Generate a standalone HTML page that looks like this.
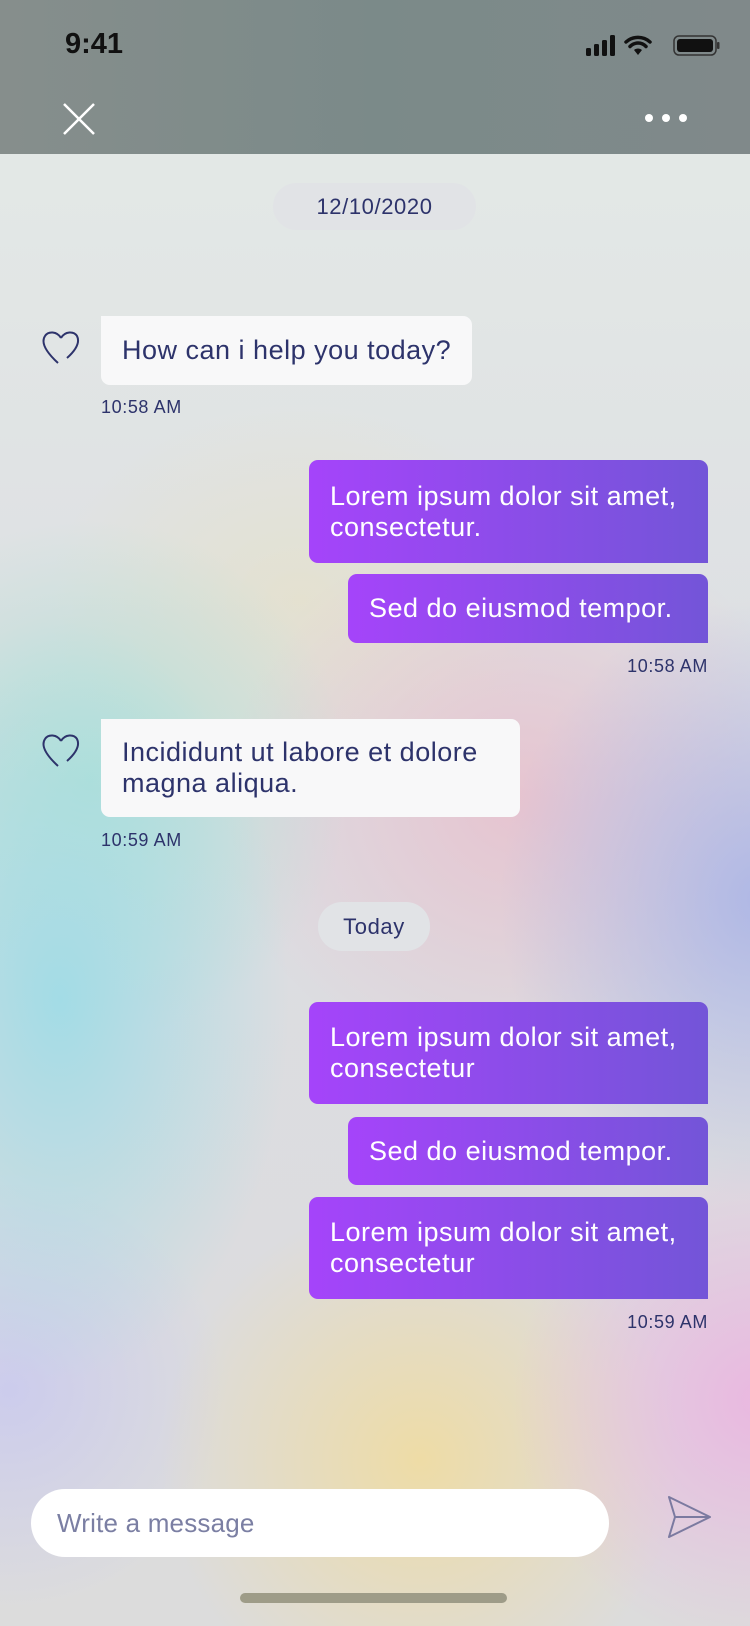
<!DOCTYPE html>
<html><head><meta charset="utf-8"><style>
*{margin:0;padding:0;box-sizing:border-box}
body{width:750px;height:1626px;overflow:hidden;position:relative;font-family:"Liberation Sans",sans-serif;
background:
radial-gradient(ellipse 230px 380px at 60px 1000px,rgba(160,220,230,.95),rgba(160,220,230,0) 100%),
radial-gradient(ellipse 260px 260px at 90px 780px,rgba(170,225,210,.8),rgba(170,225,210,0) 100%),
radial-gradient(ellipse 260px 300px at 760px 900px,rgba(170,180,230,.9),rgba(170,180,230,0) 100%),
radial-gradient(ellipse 300px 280px at 520px 800px,rgba(235,185,200,.7),rgba(235,185,200,0) 100%),
radial-gradient(ellipse 250px 250px at 760px 1400px,rgba(235,180,225,.9),rgba(235,180,225,0) 100%),
radial-gradient(ellipse 260px 260px at 420px 1460px,rgba(240,220,160,.9),rgba(240,220,160,0) 100%),
radial-gradient(ellipse 220px 220px at 10px 1390px,rgba(200,200,240,.8),rgba(200,200,240,0) 100%),
radial-gradient(ellipse 250px 200px at 300px 600px,rgba(230,225,200,.7),rgba(230,225,200,0) 100%),
linear-gradient(#e5ebe7,#dcdde2 50%,#dcdcdc);}
.hdr{position:absolute;left:0;top:0;width:750px;height:154px;background:linear-gradient(90deg,#868e8c,#7b8a89 50%,#80898a)}
.abs{position:absolute}
.pill{position:absolute;background:#e1e3e6;border-radius:24px;color:#2d336b;font-size:22px;letter-spacing:.6px;text-align:center}
.in{position:absolute;left:101px;background:#f8f8f9;border-radius:0 9px 9px 9px;color:#2d336b;font-size:27px;letter-spacing:.5px;line-height:31px;padding:0 21px;display:flex;align-items:center}
.out{position:absolute;right:42px;background:linear-gradient(90deg,#a544fa,#7355d8);border-radius:9px 9px 0 9px;color:#fff;font-size:27px;letter-spacing:.5px;line-height:31px;padding:0 21px;display:flex;align-items:center}
.t{position:absolute;color:#2d336b;font-size:18px;letter-spacing:.6px}
</style></head><body>
<div class="hdr"></div>
<div class="abs" style="left:65px;top:28px;font-size:29px;font-weight:bold;color:#111">9:41</div>
<svg class="abs" style="left:585px;top:34px" width="135" height="24">
<rect x="1" y="14" width="5" height="8" rx="1.5" fill="#111"/><rect x="9" y="10" width="5" height="12" rx="1.5" fill="#111"/><rect x="17" y="6" width="5" height="16" rx="1.5" fill="#111"/><rect x="25" y="1" width="5" height="21" rx="1.5" fill="#111"/>
<path d="M41 8a18 18 0 0 1 24 0M45 12.5a11 11 0 0 1 16 0" stroke="#111" stroke-width="3.5" fill="none" stroke-linecap="round"/><path d="M49 16l4 5 4-5a6 6 0 0 0-8 0z" fill="#111"/>
<rect x="89" y="2" width="42" height="19" rx="5" fill="none" stroke="#333" stroke-width="1.5"/><rect x="92" y="5" width="36" height="13" rx="3" fill="#111"/><rect x="132" y="8" width="2.5" height="7" rx="1" fill="#333"/>
</svg>
<svg class="abs" style="left:62px;top:102px" width="34" height="34"><path d="M2 2L32 32M32 2L2 32" stroke="#fff" stroke-width="2.5"/></svg>
<svg class="abs" style="left:644px;top:112px" width="44" height="14"><circle cx="5" cy="6" r="4" fill="#fff"/><circle cx="22" cy="6" r="4" fill="#fff"/><circle cx="39" cy="6" r="4" fill="#fff"/></svg>

<div class="pill" style="left:273px;top:183px;width:203px;height:47px;line-height:47px">12/10/2020</div>

<svg class="abs" style="left:41px;top:330px" width="40" height="36"><path d="M20 8C16 1 7 1 4 6C0 12 4 21 17 33M20 8C24 1 33 1 36 6C39 12 36 19 26 28" stroke="#2d336b" stroke-width="2" fill="none"/></svg>
<div class="in" style="top:316px;height:69px">How can i help you today?</div>
<div class="t" style="left:101px;top:397px">10:58 AM</div>

<div class="out" style="top:460px;width:399px;height:103px">Lorem ipsum dolor sit amet, consectetur.</div>
<div class="out" style="top:574px;width:360px;height:69px">Sed do eiusmod tempor.</div>
<div class="t" style="right:42px;top:656px">10:58 AM</div>

<svg class="abs" style="left:41px;top:733px" width="40" height="36"><path d="M20 8C16 1 7 1 4 6C0 12 4 21 17 33M20 8C24 1 33 1 36 6C39 12 36 19 26 28" stroke="#2d336b" stroke-width="2" fill="none"/></svg>
<div class="in" style="top:719px;width:419px;height:98px">Incididunt ut labore et dolore magna aliqua.</div>
<div class="t" style="left:101px;top:830px">10:59 AM</div>

<div class="pill" style="left:318px;top:902px;width:112px;height:49px;line-height:49px">Today</div>

<div class="out" style="top:1002px;width:399px;height:102px">Lorem ipsum dolor sit amet, consectetur</div>
<div class="out" style="top:1117px;width:360px;height:68px">Sed do eiusmod tempor.</div>
<div class="out" style="top:1197px;width:399px;height:102px">Lorem ipsum dolor sit amet, consectetur</div>
<div class="t" style="right:42px;top:1312px">10:59 AM</div>

<div class="abs" style="left:31px;top:1489px;width:578px;height:68px;background:#fff;border-radius:34px;color:#7b7fa3;font-size:26px;letter-spacing:.2px;line-height:68px;padding-left:26px">Write a message</div>
<svg class="abs" style="left:666px;top:1494px" width="48" height="46"><path d="M3 3L44 23L3 43L9 23ZM9 23H44" stroke="#7b7aa0" stroke-width="2" fill="none" stroke-linejoin="round"/></svg>
<div class="abs" style="left:240px;top:1593px;width:267px;height:10px;border-radius:5px;background:#9e9c88"></div>
</body></html>
